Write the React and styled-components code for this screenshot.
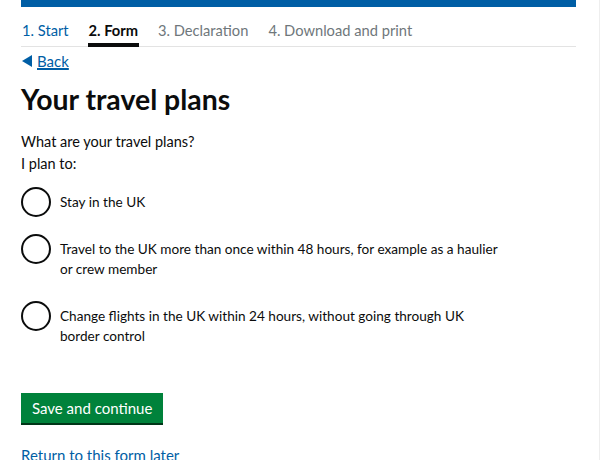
import React from 'react';
import styled, { createGlobalStyle } from 'styled-components';

const GlobalStyle = createGlobalStyle`
  html, body {
    margin: 0;
    padding: 0;
    background: #ffffff;
  }
  body {
    font-family: Lato, "Liberation Sans", sans-serif;
    color: #0b0c0c;
    border-right: 1px solid #eeeeee;
    min-height: 460px;
    box-sizing: border-box;
    width: 600px;
  }
`;

const steps = [
  { label: '1. Start', state: 'done' },
  { label: '2. Form', state: 'current' },
  { label: '3. Declaration', state: 'todo' },
  { label: '4. Download and print', state: 'todo' },
];

const options = [
  'Stay in the UK',
  'Travel to the UK more than once within 48 hours, for example as a haulier or crew member',
  'Change flights in the UK within 24 hours, without going through UK border control',
];

const App = () => {
  return (
    <>
      <GlobalStyle />
      <Page>
        <TopBar />
        <StepNav>
          {steps.map((s) => (
            <Step key={s.label} state={s.state}>{s.label}</Step>
          ))}
        </StepNav>

        <BackLink href="#">
          <Arrow />
          <span>Back</span>
        </BackLink>

        <Heading>Your travel plans</Heading>

        <Question>What are your travel plans?</Question>
        <Hint>I plan to:</Hint>

        <RadioList>
          {options.map((opt, idx) => (
            <RadioItem key={idx}>
              <RadioCircle type="radio" name="plans" />
              <RadioLabel>{opt}</RadioLabel>
            </RadioItem>
          ))}
        </RadioList>

        <SaveButton>Save and continue</SaveButton>

        <ReturnLink href="#">Return to this form later</ReturnLink>
      </Page>
    </>
  );
};

const Page = styled.div`
  width: 555px;
  margin-left: 21px;
  display: flex;
  flex-direction: column;
  align-items: flex-start;
`;

const TopBar = styled.div`
  width: 100%;
  height: 7px;
  background-color: #005ea5;
`;

const StepNav = styled.nav`
  width: 100%;
  display: flex;
  gap: 18px;
  margin-top: 12px;
  border-bottom: 1px solid #e3e3e3;
`;

const Step = styled.span`
  font-size: 14.7px;
  line-height: 20px;
  padding: 1px 1px 3px;
  border-bottom: 4px solid ${(p) => (p.state === 'current' ? '#0b0c0c' : 'transparent')};
  font-weight: ${(p) => (p.state === 'current' ? 700 : 400)};
  color: ${(p) =>
    p.state === 'current' ? '#0b0c0c' : p.state === 'done' ? '#005ea5' : '#6f777b'};
  margin-bottom: -1px;
`;

const BackLink = styled.a`
  display: flex;
  align-items: center;
  gap: 5px;
  margin-top: 4px;
  font-size: 15px;
  line-height: 20px;
  color: #005ea5;
  span {
    text-decoration: underline;
    text-underline-offset: 2px;
  }
`;

const Arrow = styled.i`
  width: 0;
  height: 0;
  margin-left: 1px;
  border-top: 6px solid transparent;
  border-bottom: 6px solid transparent;
  border-right: 10px solid #005ea5;
`;

const Heading = styled.h1`
  margin: 12px 0 0;
  font-size: 28.4px;
  line-height: 32px;
  font-weight: 700;
`;

const Question = styled.p`
  margin: 16px 0 0;
  font-size: 14.5px;
  line-height: 22px;
`;

const Hint = styled.p`
  margin: 0;
  font-size: 14.5px;
  line-height: 22px;
`;

const RadioList = styled.div`
  display: flex;
  flex-direction: column;
  gap: 17px;
  margin-top: 12px;
`;

const RadioItem = styled.label`
  display: flex;
  align-items: flex-start;
  gap: 9px;
`;

const RadioCircle = styled.input`
  appearance: none;
  margin: 0;
  flex: none;
  width: 30px;
  height: 30px;
  border: 2px solid #0b0c0c;
  border-radius: 50%;
  box-sizing: border-box;
  background: #ffffff;
`;

const RadioLabel = styled.span`
  width: 442px;
  padding: 5px 0;
  font-size: 13.6px;
  line-height: 20px;
`;

const SaveButton = styled.button`
  margin-top: 42px;
  padding: 6px 11px 5px;
  border: none;
  border-radius: 0;
  background-color: #00823b;
  box-shadow: 0 2px 0 #003618;
  color: #ffffff;
  font-family: Lato, "Liberation Sans", sans-serif;
  font-size: 15px;
  line-height: 19px;
`;

const ReturnLink = styled.a`
  margin-top: 22px;
  font-size: 15px;
  line-height: 20px;
  color: #005ea5;
  text-decoration: underline;
  text-underline-offset: 2px;
`;

export default App;
